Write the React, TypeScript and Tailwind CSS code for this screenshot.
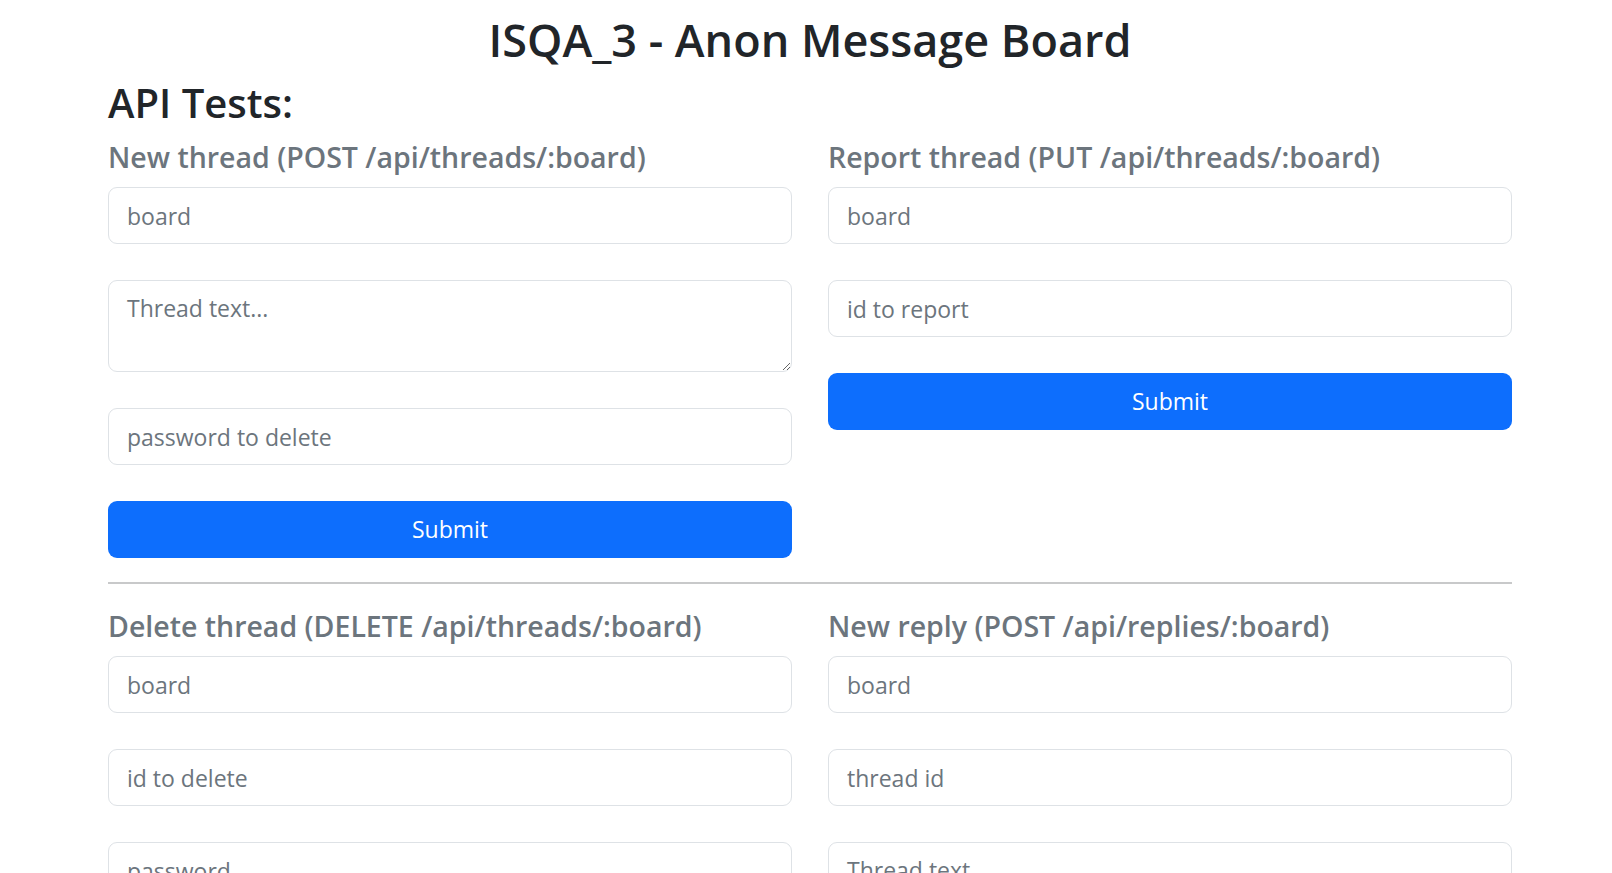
const font = { fontFamily: '"Open Sans", "Noto Sans", sans-serif' };

const Field = ({ placeholder }: { placeholder: string }) => (
  <input
    type="text"
    placeholder={placeholder}
    className="block w-full h-[57px] px-[18px] border-[1.5px] border-[#dee2e6] rounded-[9px] text-[23px] text-[#212529] placeholder:text-[#6c757d] outline-none"
  />
);

const Area = ({ placeholder }: { placeholder: string }) => (
  <textarea
    placeholder={placeholder}
    className="block w-full h-[92px] px-[18px] py-[9px] leading-[36px] border-[1.5px] border-[#dee2e6] rounded-[9px] text-[23px] text-[#212529] placeholder:text-[#6c757d] outline-none"
  />
);

const SubmitButton = () => (
  <button className="block w-full h-[57px] rounded-[9px] bg-[#0d6efd] text-white text-[23px]">
    Submit
  </button>
);

const Heading = ({ children }: { children: string }) => (
  <h5 className="text-[28.5px] leading-[36px] text-[#6c757d] font-semibold mb-[12px]">{children}</h5>
);

export default function App() {
  return (
    <div className="min-h-screen bg-white" style={font}>
      <div className="w-[1440px] ml-[90px] px-[18px]">
        <h2 className="text-center text-[45px] leading-[56px] font-semibold text-[#212529] pt-[12px] mb-[10px]">
          ISQA_3 - Anon Message Board
        </h2>
        <h3 className="text-[40px] leading-[49px] font-semibold text-[#212529] mb-[12px]">API Tests:</h3>

        <div className="grid grid-cols-2 gap-x-[36px]">
          <form className="flex flex-col gap-[36px]">
            <div>
              <Heading>New thread (POST /api/threads/:board)</Heading>
              <Field placeholder="board" />
            </div>
            <Area placeholder="Thread text..." />
            <Field placeholder="password to delete" />
            <SubmitButton />
          </form>
          <form className="flex flex-col gap-[36px]">
            <div>
              <Heading>Report thread (PUT /api/threads/:board)</Heading>
              <Field placeholder="board" />
            </div>
            <Field placeholder="id to report" />
            <SubmitButton />
          </form>
        </div>

        <hr className="my-[24px] h-[2px] border-0 bg-[#c8c9ca]" />

        <div className="grid grid-cols-2 gap-x-[36px] pb-[40px]">
          <form className="flex flex-col gap-[36px]">
            <div>
              <Heading>Delete thread (DELETE /api/threads/:board)</Heading>
              <Field placeholder="board" />
            </div>
            <Field placeholder="id to delete" />
            <Field placeholder="password" />
            <SubmitButton />
          </form>
          <form className="flex flex-col gap-[36px]">
            <div>
              <Heading>New reply (POST /api/replies/:board)</Heading>
              <Field placeholder="board" />
            </div>
            <Field placeholder="thread id" />
            <Area placeholder="Thread text..." />
            <Field placeholder="password to delete" />
            <SubmitButton />
          </form>
        </div>
      </div>
    </div>
  );
}
